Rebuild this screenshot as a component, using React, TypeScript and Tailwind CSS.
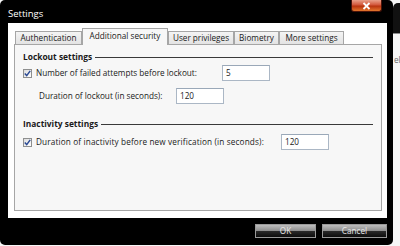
import React from "react";

function Check() {
  return (
    <div className="w-[9px] h-[9px] border border-[#8e8f8f] bg-[linear-gradient(135deg,#dcdcdc,#ffffff)] flex items-center justify-center shrink-0">
      <svg width="7" height="7" viewBox="0 0 7 7">
        <path d="M0.8 3.6 L2.7 5.6 L6.2 0.9" stroke="#2b4a94" strokeWidth="1.5" fill="none" />
      </svg>
    </div>
  );
}

function Field({ value }: { value: string }) {
  return (
    <div className="w-[48px] h-[16px] bg-white border border-[#abb7c5] border-t-[#9aa8b8] pl-[3px] flex items-center text-[8.2px] text-[#1a1a1a] shrink-0">
      {value}
    </div>
  );
}

function Heading({ text }: { text: string }) {
  return (
    <div className="h-[14px] flex items-center pl-[8px] pr-[8px] gap-[3px]">
      <span className="font-bold text-[8.4px] text-[#1a1a1a] whitespace-nowrap">{text}</span>
      <div className="flex-1 h-px bg-[#3a3a3a]" />
    </div>
  );
}

function Tab({ label, w, selected }: { label: string; w: string; selected?: boolean }) {
  if (selected) {
    return (
      <div
        className={`${w} h-[17px] -mb-px bg-[#f7f7f7] border border-b-0 border-[#a6a6a6] flex items-center justify-center text-[8.2px] text-[#1a1a1a] z-10 pb-[1px]`}
      >
        {label}
      </div>
    );
  }
  return (
    <div
      className={`${w} h-[13px] bg-[linear-gradient(to_bottom,#f4f4f4,#e3e3e3)] border border-b-0 border-[#a6a6a6] flex items-center justify-center text-[8.2px] text-[#1a1a1a]`}
    >
      {label}
    </div>
  );
}

function WinButton({ label, w }: { label: string; w: string }) {
  return (
    <div
      className={`${w} h-[14px] border border-[#9a9a9a] bg-[linear-gradient(to_bottom,#bdbdbd_0%,#8e8e8e_48%,#2a2a2a_52%,#0c0c0c_100%)] flex items-center justify-center text-[8.2px] text-[#e8e8e8]`}
    >
      {label}
    </div>
  );
}

export default function App() {
  return (
    <div className="relative w-[400px] h-[246px] bg-[#f6f6f6] overflow-hidden font-['Open_Sans',sans-serif]">
      {/* window behind, at the right edge */}
      <div className="absolute left-[393px] top-[3px] w-[20px] h-[31px] bg-[#111111] rounded-tl-[5px] border-b border-[#8a8a8a]" />
      <div className="absolute left-[394px] top-[54px] text-[8.2px] text-[#6a6a6a]">el</div>

      <div className="absolute left-0 top-0 w-[393px] h-[245px] bg-black rounded-[5px] flex flex-col">
        {/* title bar */}
        <div className="h-[23px] flex items-start shrink-0">
          <span className="ml-[8px] mt-[8px] text-[9.5px] leading-[12px] text-white">Settings</span>
          <div className="ml-auto mr-[11px] w-[31px] h-[12px] rounded-b-[3px] border border-t-0 border-[#4a140a] bg-[linear-gradient(to_bottom,#e9a08a_0%,#d2573a_45%,#b8330f_55%,#e2752c_100%)] flex items-center justify-center">
            <svg width="9" height="8" viewBox="0 0 9 8">
              <path d="M1.5 1 L7.5 7 M7.5 1 L1.5 7" stroke="#ffffff" strokeWidth="1.8" />
            </svg>
          </div>
        </div>

        {/* client area */}
        <div className="ml-[8px] mr-[6px] h-[195px] bg-white pl-[6px] pr-[5px] pt-[5px] pb-[7px] flex flex-col shrink-0">
          <div className="h-[16px] flex items-end pl-[1px] shrink-0">
            <Tab label="Authentication" w="w-[67px]" />
            <Tab label="Additional security" w="w-[86px]" selected />
            <Tab label="User privileges" w="w-[66px]" />
            <Tab label="Biometry" w="w-[45px]" />
            <Tab label="More settings" w="w-[65px]" />
          </div>
          <div className="flex-1 bg-[#f7f7f7] border border-[#a6a6a6] pt-[5px] flex flex-col">
            <Heading text="Lockout settings" />
            <div className="mt-[1px] h-[16px] flex items-center pl-[8px]">
              <Check />
              <span className="ml-[4px] w-[186px] text-[8.2px] text-[#1a1a1a] whitespace-nowrap">
                Number of failed attempts before lockout:
              </span>
              <Field value="5" />
            </div>
            <div className="mt-[7px] h-[16px] flex items-center pl-[24px]">
              <span className="w-[137px] text-[8.2px] text-[#1a1a1a] whitespace-nowrap">
                Duration of lockout (in seconds):
              </span>
              <Field value="120" />
            </div>
            <div className="mt-[13px]">
              <Heading text="Inactivity settings" />
            </div>
            <div className="mt-[3px] h-[16px] flex items-center pl-[8px]">
              <Check />
              <span className="ml-[4px] w-[245px] text-[8.2px] tracking-[0.15px] text-[#1a1a1a] whitespace-nowrap">
                Duration of inactivity before new verification (in seconds):
              </span>
              <Field value="120" />
            </div>
          </div>
        </div>

        {/* buttons */}
        <div className="mt-[6px] pr-[6px] flex justify-end gap-[6px]">
          <WinButton label="OK" w="w-[61px]" />
          <WinButton label="Cancel" w="w-[65px]" />
        </div>
      </div>
    </div>
  );
}
